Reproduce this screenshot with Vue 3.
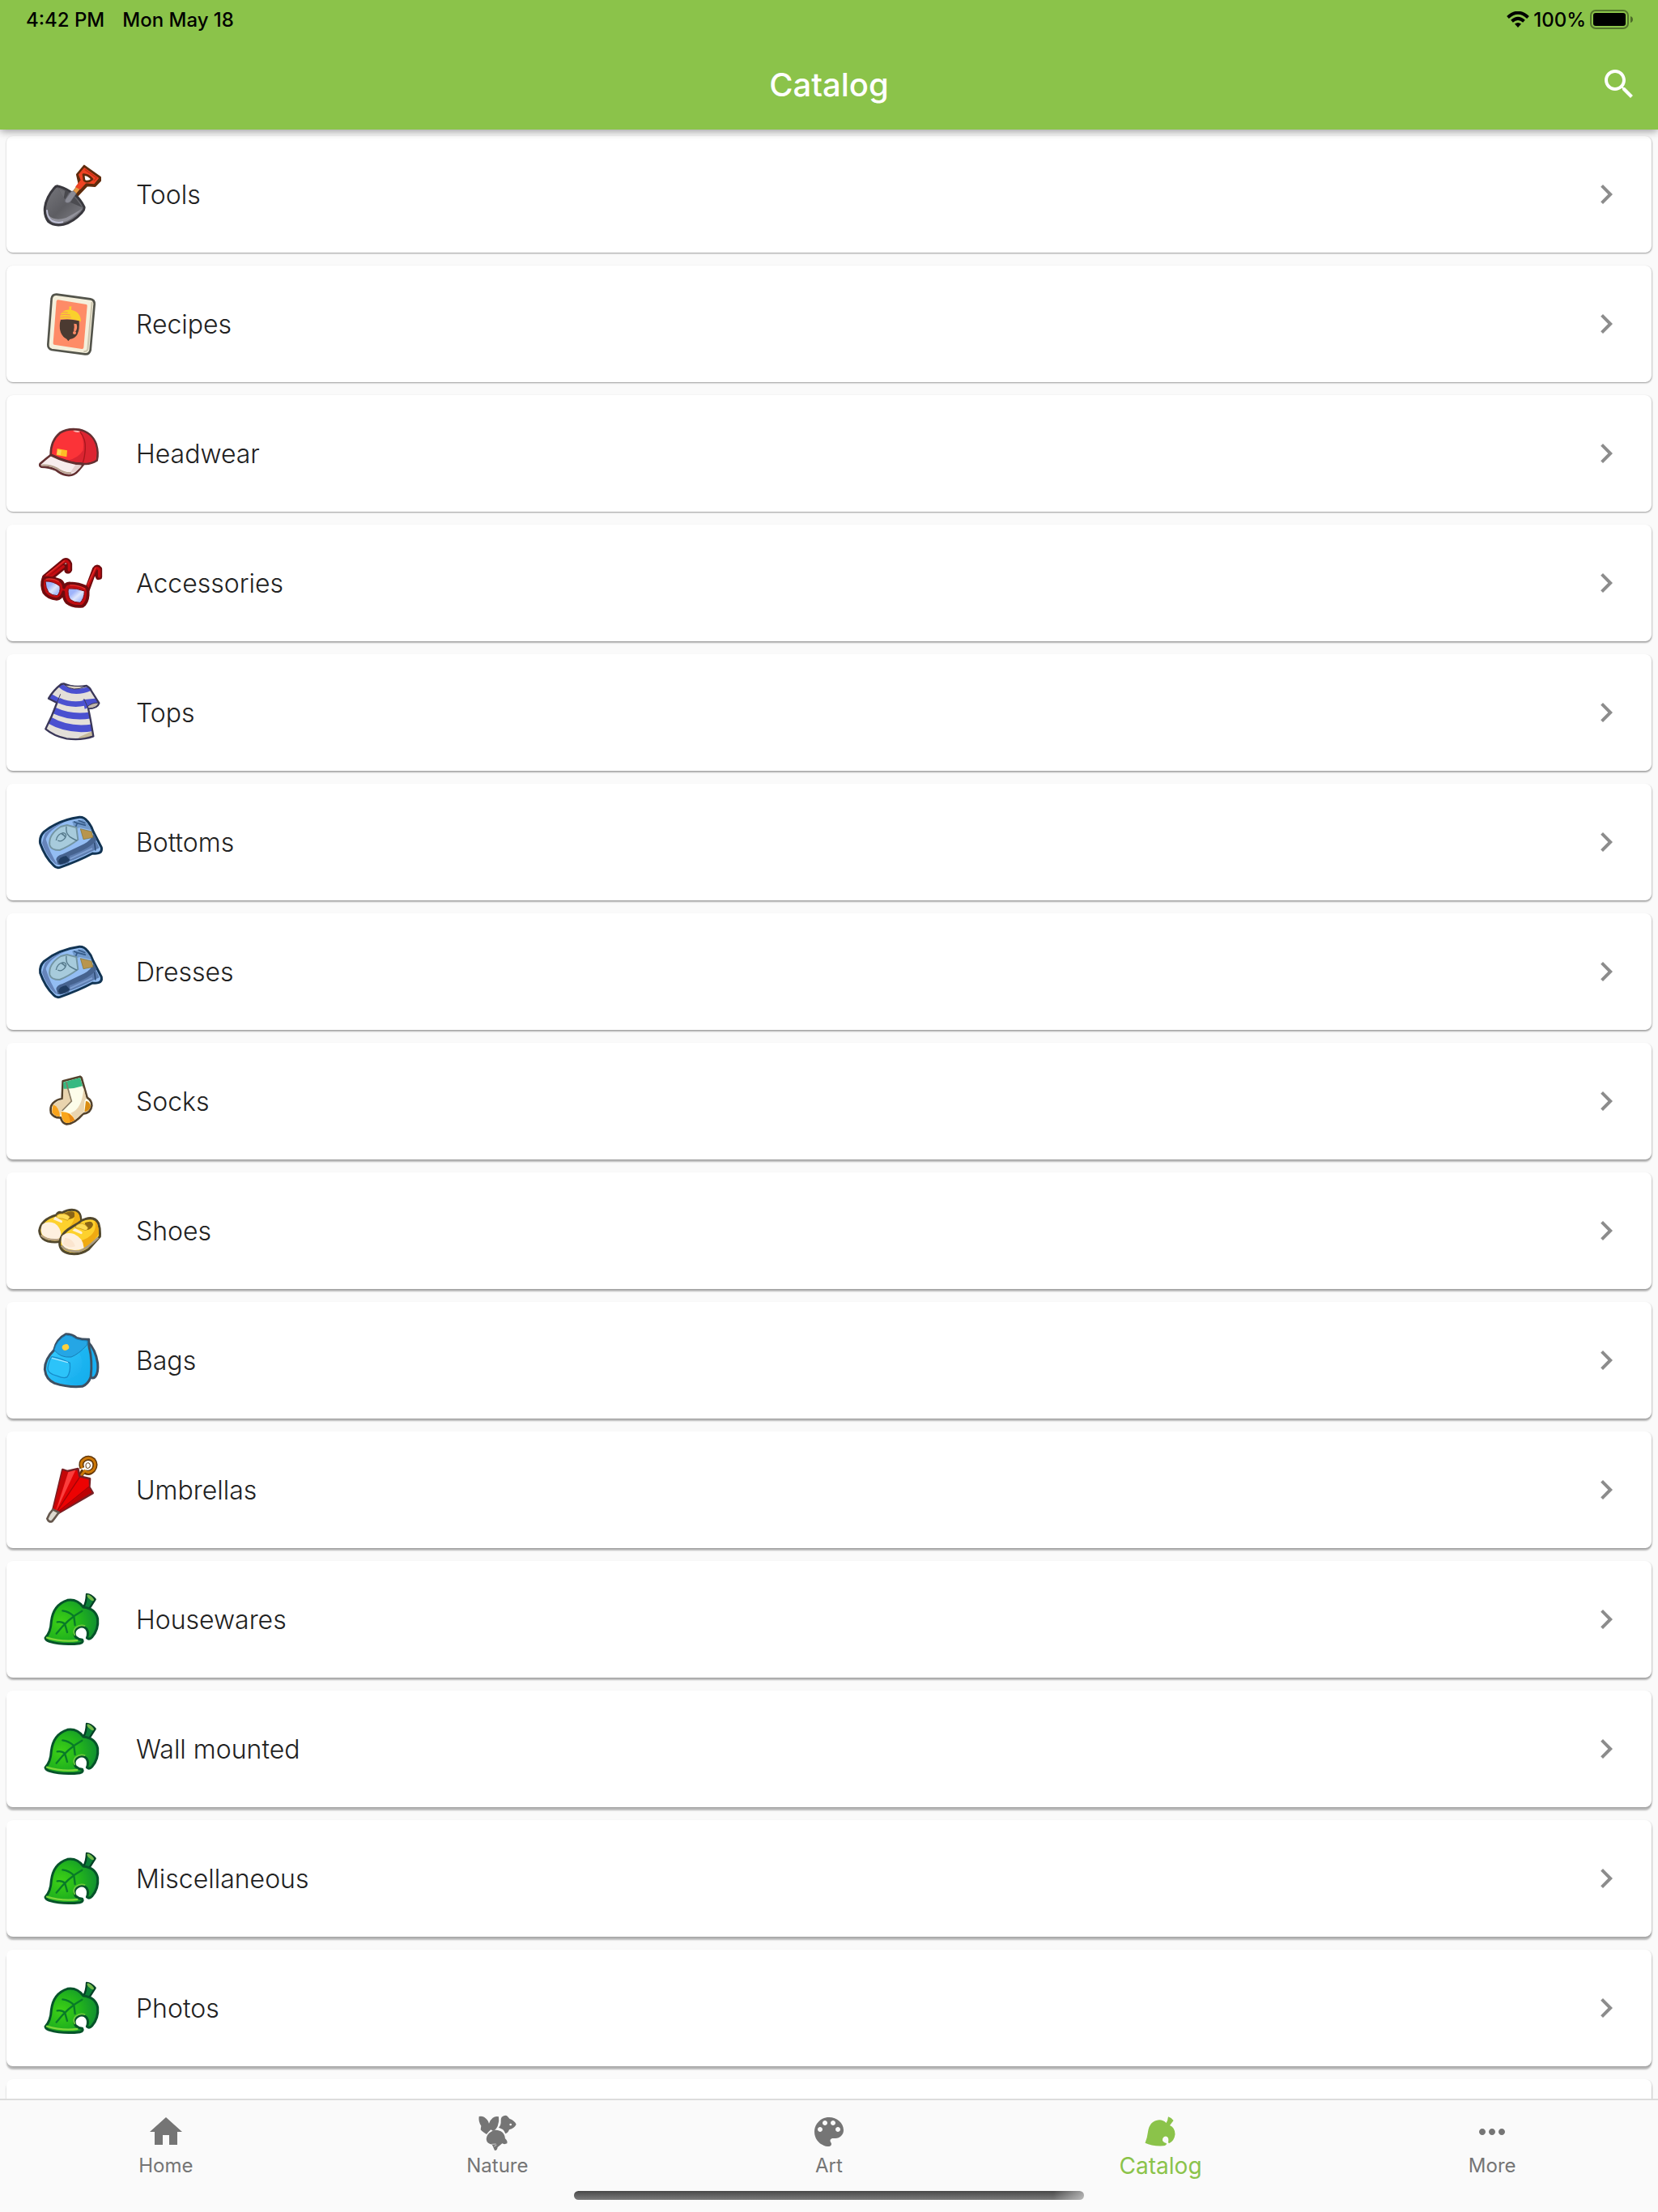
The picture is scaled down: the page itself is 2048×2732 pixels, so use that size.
<template>
  <div class="app">
    <svg class="sprite" aria-hidden="true">
      <defs>
        <linearGradient id="g-lens" x1="0" y1="0" x2="1" y2="1">
          <stop offset="0.3" stop-color="#9fb4fb" />
          <stop offset="0.55" stop-color="#dfe7fd" />
          <stop offset="0.8" stop-color="#a9bdf8" />
        </linearGradient>
        <linearGradient id="g-bag" x1="0" y1="0" x2="1" y2="1">
          <stop offset="0.3" stop-color="#2fc6fb" />
          <stop offset="1" stop-color="#12a6ea" />
        </linearGradient>
        <linearGradient id="g-shovel" x1="0" y1="0" x2="1" y2="1">
          <stop offset="0" stop-color="#77777d" />
          <stop offset="0.5" stop-color="#5d5d62" />
          <stop offset="1" stop-color="#85858c" />
        </linearGradient>
        <radialGradient id="g-leaf" cx="0.3" cy="0.5" r="0.75">
          <stop offset="0" stop-color="#3ed016" />
          <stop offset="0.5" stop-color="#22b41c" />
          <stop offset="1" stop-color="#0d8a35" />
        </radialGradient>
      </defs>

      <symbol id="tools" viewBox="30 6 288 288">
        <path d="M171 158 L204 112 L196 77 L222 45 L281 87 L281 99 L262 119 L232 117 L188 164Z" fill="#5f2b0c" stroke="#5f2b0c" stroke-width="8" stroke-linejoin="round" />
        <path d="M176 146 L194 120 L207 130 L188 152Z" fill="#e79a45" />
        <path d="M192 122 L211 97 L203 77 L223 53 L274 90 L258 110 L228 107 L207 130Z" fill="#ee4423" stroke="#ee4423" stroke-width="4" stroke-linejoin="round" />
        <path d="M224 58 L268 89 L257 101" fill="none" stroke="#c92f17" stroke-width="4" />
        <path d="M219 77 Q236 76 252 94 Q235 109 222 98Z" fill="#fff" stroke="#5f2b0c" stroke-width="8" stroke-linejoin="round" />
        <path d="M125 120 Q144 124 167 138 L185 149 Q208 168 222 197 Q224 207 213 218 Q182 252 145 262 Q108 268 90 252 Q74 232 76 202 Q80 163 111 127 Q117 118 125 120Z" fill="url(#g-shovel)" stroke="#39383e" stroke-width="9" stroke-linejoin="round" />
        <path d="M82 207 Q84 239 103 252 Q137 261 170 242 Q199 222 215 203 Q183 222 155 237 Q113 250 91 229Z" fill="#92929b" />
        <path d="M84 210 Q85 236 103 249 Q123 258 142 253" fill="none" stroke="#bfc0d6" stroke-width="6" stroke-linecap="round" />
        <path d="M124 126 L167 141 L151 169Z" fill="#49494e" />
        <path d="M124 126 L151 137 L146 163Z" fill="#6d6d72" />
        <path d="M184 158 L216 199 L170 179Z" fill="#4c4c51" />
        <path d="M153 169 L173 140 Q184 134 192 148 L171 177 Q157 187 151 176Z" fill="#8a8b95" stroke="#6b6b75" stroke-width="2" />
      </symbol>

      <symbol id="recipes" viewBox="30 486 288 288">
        <path d="M120 521 L245 538 Q261 541 260 557 L245 727 Q241 744 225 742 L102 726 Q87 722 88 706 L101 536 Q104 520 120 521Z" fill="#f4efdb" stroke="#53544b" stroke-width="8" />
        <path d="M251 549 L235 725 Q231 733 220 733" fill="none" stroke="#cbc5af" stroke-width="6" />
        <path d="M125 541 L230 558 Q234 559 233 565 L220 718 Q219 724 213 723 L110 707 Q106 706 107 700 L119 547 Q120 541 125 541Z" fill="#fe8b67" />
        <path d="M133 604 Q133 580 167 577 L166 566 L175 565 L174 578 Q209 585 210 621 Q200 619 190 615 Q157 609 133 612Z" fill="#fad02c" />
        <path d="M134 588 Q149 586 161 588 M132 597 Q151 593 170 597 M133 606 Q151 602 173 606" fill="none" stroke="#fe8b67" stroke-width="3" />
        <path d="M135 615 Q168 610 203 619 Q208 683 169 687 L163 694 L157 686 Q127 670 132 626Z" fill="#4b3a31" />
        <path d="M184 629 L194 631 Q198 647 191 657 L183 656 Q187 642 184 629Z" fill="#fe8b67" />
        <circle cx="186" cy="663" r="6" fill="#fe8b67" />
      </symbol>

      <symbol id="headwear" viewBox="30 36 288 288">
        <path d="M98 184 Q98 132 132 104 Q160 86 203 92 Q249 102 266 145 Q276 179 269 206 Q244 222 218 218 Q160 216 98 184Z" fill="#fb3338" stroke="#633031" stroke-width="8" stroke-linejoin="round" />
        <path d="M205 96 Q252 107 264 151 Q272 179 264 203 Q244 216 219 214 Q191 214 158 207 Q199 199 218 169 Q224 130 205 96Z" fill="#dc2531" />
        <path d="M205 98 Q229 127 226 163 Q224 194 217 214" fill="none" stroke="#a9171c" stroke-width="4" />
        <path d="M180 96 Q193 93 208 99 Q195 107 180 96Z" fill="#f5b8b7" />
        <path d="M122 162 L159 169 L157 193 L119 186Z" fill="#fdbd25" />
        <path d="M124 166 L138 169 L134 187 L121 184Z" fill="#fdd755" />
        <path d="M98 186 Q157 216 219 221 L201 243 Q182 266 154 260 Q137 257 118 242 Q93 230 63 230 Q55 226 59 218 Q77 202 98 186Z" fill="#f8eded" stroke="#633031" stroke-width="8" stroke-linejoin="round" />
        <path d="M190 222 L213 224 Q199 248 169 253Z" fill="#e5d1cf" />
        <path d="M64 224 Q96 222 121 235 Q145 254 174 253" fill="none" stroke="#b6a08d" stroke-width="6" />
      </symbol>

      <symbol id="accessories" viewBox="30 516 288 288">
        <g fill="none" stroke-linecap="round" stroke-linejoin="round">
          <path d="M76 638 L148 578 Q162 573 168 590 L168 611 Q165 619 158 615 L156 599 M98 641 L149 599" stroke="#6f0b0e" stroke-width="19" />
          <path d="M233 685 L261 609 Q270 596 279 608 L279 638 L274 639 L267 623" stroke="#6f0b0e" stroke-width="19" />
          <path d="M78 639 L148 580 Q160 575 166 591 L166 612 M94 639 L145 599" stroke="#c30c11" stroke-width="10" />
          <path d="M233 678 L263 608 Q270 600 278 611 L278 636" stroke="#c30c11" stroke-width="10" />
          <path d="M83 630 L148 579 M235 665 L264 604" stroke="#e2302b" stroke-width="4" />
        </g>
        <path d="M70 642 Q102 637 132 650 Q146 658 147 677 Q152 660 170 661 Q203 662 228 674 Q238 682 236 705 Q234 734 216 746 Q180 750 158 733 Q145 720 145 693 Q138 718 120 720 Q88 717 73 696 Q61 667 70 642Z" fill="#c30c11" stroke="#6f0b0e" stroke-width="11" stroke-linejoin="round" />
        <path d="M78 654 Q107 652 132 672 Q135 694 122 707 Q103 707 90 695 Q79 678 78 654Z" fill="url(#g-lens)" stroke="#7d0b10" stroke-width="3" />
        <path d="M163 681 Q193 678 223 690 Q222 719 207 733 Q184 733 170 721 Q160 705 163 681Z" fill="url(#g-lens)" stroke="#7d0b10" stroke-width="3" />
        <path d="M80 646 Q107 642 128 655 M169 668 Q203 668 225 682" fill="none" stroke="#e2302b" stroke-width="4" />
      </symbol>

      <symbol id="tops" viewBox="30 36 288 288">
        <clipPath id="c-shirt">
          <path d="M146 73 Q185 90 231 81 Q244 88 249 101 L277 145 Q271 165 237 165 Q245 200 256 268 Q214 284 157 277 Q109 267 79 241 Q103 194 121 144 L90 128 Q107 98 137 75Z" />
        </clipPath>
        <g clip-path="url(#c-shirt)">
          <path d="M70 60H290V290H70Z" fill="#e3dfd9" />
          <path d="M132 78 Q178 119 245 90" fill="none" stroke="#4a50d0" stroke-width="18" />
          <path d="M128 135 Q175 156 224 145" fill="none" stroke="#4a50d0" stroke-width="20" />
          <path d="M110 172 Q175 202 246 190" fill="none" stroke="#4a50d0" stroke-width="24" />
          <path d="M92 208 Q165 250 254 236" fill="none" stroke="#4a50d0" stroke-width="26" />
          <path d="M88 117 L127 139" stroke="#4a50d0" stroke-width="23" />
          <path d="M217 133 L275 127 L279 145 L224 167Z" fill="#4a50d0" />
          <path d="M205 270 L251 250 L260 280 L195 283Z" fill="#c4b899" />
        </g>
        <path d="M146 73 Q185 90 231 81 Q244 88 249 101 L277 145 Q271 165 237 165 Q245 200 256 268 Q214 284 157 277 Q109 267 79 241 Q103 194 121 144 L90 128 Q107 98 137 75Z" fill="none" stroke="#3a3759" stroke-width="7" stroke-linejoin="round" />
        <path d="M149 78 Q181 105 226 84 Q183 83 149 78Z" fill="#d9cfbf" stroke="#3a3759" stroke-width="3" />
        <path d="M233 159 Q250 143 276 144 Q270 164 239 165Z" fill="#bfb6ac" stroke="#3a3759" stroke-width="3" />
        <path d="M134 112 L121 144 M221 129 L237 165" stroke="#3a3759" stroke-width="3" />
      </symbol>

      <symbol id="bottoms" viewBox="30 516 288 288">
        <path d="M73 622 Q128 578 204 568 Q222 567 234 583 Q248 598 255 620 L286 680 Q289 697 275 701 Q263 704 253 702 Q201 730 132 754 Q119 758 109 747 Q77 716 59 665 Q55 640 73 622Z" fill="#93bdf3" stroke="#123453" stroke-width="9" stroke-linejoin="round" />
        <path d="M77 628 Q106 600 150 586 Q89 616 80 650 Q96 703 124 744 L114 741 Q79 708 66 663Z" fill="#6584ba" />
        <path d="M124 743 Q114 717 144 705 L210 680 Q240 666 258 638 L278 682 L249 695 Q182 731 124 743Z" fill="#5d7daf" />
        <path d="M118 724 Q120 710 142 705 L222 667 Q245 655 258 630 L268 650 Q252 680 168 711 L166 736 Q136 748 124 743Z" fill="#46638f" />
        <path d="M126 733 Q129 715 155 711 L169 727 Q151 742 132 743Z" fill="#203d62" />
        <path d="M170 722 L252 684" fill="none" stroke="#7d9ed0" stroke-width="6" />
        <path d="M260 662 L264 692" fill="none" stroke="#27456d" stroke-width="4" />
        <path d="M177 584 L216 577 Q239 590 249 616 L206 606 L188 611Z" fill="#7099ca" />
        <path d="M183 584 L196 590 L189 608 M196 590 L228 598 M200 580 L226 590" fill="none" stroke="#365b88" stroke-width="5" />
        <path d="M158 597 L193 606 L199 651 Q166 676 131 690 Q99 690 94 671 Q89 632 135 603Z" fill="#a7cbdc" stroke="#7395a2" stroke-width="6" />
        <path d="M156 602 Q152 626 168 640 Q180 648 196 655 M118 654 Q122 630 144 626 Q160 628 152 644 Q138 662 124 654 M152 644 Q150 634 138 630" fill="none" stroke="#54788a" stroke-width="4" />
        <path d="M208 611 L249 621 L255 643 L219 650Z" fill="#b8954d" stroke="#80722f" stroke-width="2" />
      </symbol>

      <symbol id="socks" viewBox="30 36 288 288">
        <path d="M143 106 L207 89 Q213 91 214 101 L233 167 Q251 178 250 197 Q247 224 218 227 Q185 266 156 265 Q139 261 135 241 Q111 243 99 224 Q94 202 106 188 Q120 173 140 171Z" fill="#fdfdea" stroke="#53422c" stroke-width="8" stroke-linejoin="round" />
        <path d="M146 133 L164 131 L175 180 L139 216 L132 238 Q112 236 103 222 Q99 201 111 189 Q125 177 143 174Z" fill="#e9d4ae" />
        <path d="M107 193 Q130 201 132 238 Q112 236 103 221Z" fill="#f8a31c" />
        <path d="M137 219 Q175 219 187 250 Q162 268 148 257 Q137 246 137 219Z" fill="#f9a61c" />
        <path d="M159 224 Q178 233 187 250 L170 259 Q170 241 159 224Z" fill="#e78814" />
        <path d="M172 224 Q215 210 220 130 L230 170 L223 180 L221 221 L188 249Z" fill="#e9d5b0" />
        <path d="M228 180 Q241 180 246 197 Q243 216 223 220Z" fill="#d98c12" />
        <path d="M144 110 L207 93 L216 124 Q181 136 146 134Z" fill="#37b981" />
        <path d="M156 110 L161 131 L175 180 L140 216" fill="none" stroke="#887a62" stroke-width="5" />
      </symbol>

      <symbol id="shoes" viewBox="30 516 288 288">
        <path d="M119 602 Q127 588 139 594 Q164 580 187 584 Q204 589 208 606 L212 638 Q193 667 166 691 Q124 708 88 699 Q59 691 56 660 Q62 618 119 602Z" fill="#fdd12d" stroke="#51482e" stroke-width="9" stroke-linejoin="round" />
        <path d="M145 597 Q185 579 190 601 Q185 618 161 618Z" fill="#8a6516" />
        <path d="M185 587 Q203 590 206 611 L209 634 Q183 652 165 674 L152 658 Q193 629 185 587Z" fill="#f0b216" />
        <path d="M121 602 Q150 589 169 609 L161 622 Q141 612 120 614Z" fill="#fddb55" stroke="#c48d12" stroke-width="2" />
        <path d="M115 608 L138 622 Q145 628 137 631 L107 618Z" fill="#fdf0d5" />
        <path d="M66 638 Q84 622 113 633 Q140 651 136 688 Q89 698 66 674 Q58 656 66 638Z" fill="#fef0df" />
        <path d="M62 677 Q86 699 135 692" fill="none" stroke="#b9a385" stroke-width="7" />
        <path d="M200 632 Q210 621 226 617 Q261 606 275 633 Q282 655 280 682 Q263 701 238 729 Q207 751 168 745 Q133 738 131 709 Q132 671 177 646Z" fill="#fdd12d" stroke="#51482e" stroke-width="9" stroke-linejoin="round" />
        <path d="M224 631 Q252 618 255 638 Q251 653 231 658Z" fill="#8a6516" />
        <path d="M260 621 Q276 636 276 670 Q267 693 223 724 L211 697 Q277 674 260 621Z" fill="#efaa12" />
        <path d="M192 641 Q216 622 236 649 Q232 664 218 656 Q203 649 190 650Z" fill="#fddb55" stroke="#c48d12" stroke-width="2" />
        <path d="M188 651 L212 663 Q219 669 211 673 L178 659Z" fill="#fdf0d5" />
        <path d="M139 682 Q153 663 184 672 Q222 690 220 725 Q185 740 148 723 Q132 706 139 682Z" fill="#fef0df" />
        <path d="M151 686 Q181 689 189 718 Q164 728 144 709Z" fill="#fbe5cf" />
        <path d="M138 716 Q158 741 205 736 Q233 726 274 686" fill="none" stroke="#a99a83" stroke-width="8" />
      </symbol>

      <symbol id="bags" viewBox="30 36 288 288">
        <path d="M235 111 Q264 139 272 191 Q275 226 264 240 Q257 249 246 244Z" fill="#18aef0" stroke="#3e5062" stroke-width="9" stroke-linejoin="round" />
        <path d="M110 143 Q119 101 155 83 Q178 83 194 97 Q216 104 239 103 L240 130 Q253 181 246 242 Q237 268 215 277 Q165 282 112 265 Q80 251 76 214 Q76 176 110 143Z" fill="url(#g-bag)" stroke="#3e5062" stroke-width="9" stroke-linejoin="round" />
        <path d="M202 151 Q222 179 210 220 Q187 249 152 253 L207 271 Q243 259 243 230 Q249 176 236 133Z" fill="#15b2ef" opacity="0.55" />
        <path d="M111 142 Q120 105 155 87 Q176 87 192 101 Q211 108 234 108 L233 123 Q202 157 174 168 Q133 172 111 142Z" fill="#25a6e5" stroke="#177db5" stroke-width="3" />
        <path d="M102 167 Q139 174 169 190 Q172 225 159 242 Q148 249 122 238 Q86 230 87 210 Q91 181 102 167Z" fill="#2cc3f9" stroke="#168bc9" stroke-width="4" />
        <path d="M103 172 L160 188" stroke="#a6e7ff" stroke-width="4" stroke-linecap="round" />
        <ellipse cx="153" cy="132" rx="13" ry="11" fill="#fdd13e" transform="rotate(-20 153 132)" />
      </symbol>

      <symbol id="umbrellas" viewBox="30 516 288 288">
        <path d="M210 605 L220 588 M214 580 Q206 558 221 548 Q239 536 256 550 Q269 567 256 586 Q243 602 226 594" fill="none" stroke="#62360a" stroke-width="18" />
        <path d="M214 580 Q206 558 221 548 Q239 536 256 550 Q269 567 256 586 Q240 602 224 590 L210 608" fill="none" stroke="#cd7908" stroke-width="9" />
        <path d="M228 568 Q230 558 240 561 Q247 568 243 576 Q236 584 229 578Z" fill="#fff" stroke="#62360a" stroke-width="3" />
        <path d="M142 585 L159 591 L199 582 L205 610 L243 619 L241 650 L254 672 L117 752 L106 735Z" fill="#e20305" stroke="#782025" stroke-width="8" stroke-linejoin="round" />
        <path d="M142 588 L163 594 L111 742 L107 733Z" fill="#c40708" />
        <path d="M163 595 L190 587 L116 744Z" fill="#fb3e3d" />
        <path d="M204 614 L238 622 L240 651 L124 743Z" fill="#ed0202" />
        <path d="M205 614 L117 745 M240 649 L119 747" stroke="#a70306" stroke-width="4" />
        <path d="M240 651 L250 670 L126 746 Z" fill="#bc0204" />
        <path d="M106 733 L128 744 Q112 767 103 777 Q91 782 85 767 Q92 747 106 733Z" fill="#ddd9cf" stroke="#66584e" stroke-width="8" stroke-linejoin="round" />
      </symbol>

      <symbol id="leaf" viewBox="30 36 288 288">
        <path d="M218 137 Q230 119 231 87 Q247 88 263 106 L242 139Z" fill="#0c8038" stroke="#043f25" stroke-width="7" stroke-linejoin="round" />
        <ellipse cx="245" cy="100" rx="16" ry="6" transform="rotate(42 245 100)" fill="#73bb4b" />
        <path d="M78 249 Q98 228 100 188 Q107 126 160 109 Q195 103 219 135 Q264 140 272 178 Q276 217 251 246 Q241 257 232 249 Q240 230 230 215 Q217 201 198 212 Q179 226 190 245 Q200 255 215 256 Q220 265 207 269 Q144 277 93 262 Q79 257 78 249Z" fill="url(#g-leaf)" stroke="#06532a" stroke-width="9" stroke-linejoin="round" />
        <path d="M84 248 Q139 265 196 258" fill="none" stroke="#80d63c" stroke-width="7" stroke-linecap="round" />
        <path d="M188 240 Q178 224 190 211 Q207 197 226 205" fill="none" stroke="#6ecb3c" stroke-width="5" />
        <path d="M214 149 Q161 178 119 233 M184 169 Q166 151 142 148 M184 170 L188 201 M151 198 Q140 187 122 190 M151 199 L159 228" fill="none" stroke="#087a28" stroke-width="7" stroke-linecap="round" />
      </symbol>

      <symbol id="nav-home" viewBox="0 0 24 24">
        <path d="M10 20v-6h4v6h5v-8h3L12 3 2 12h3v8z" />
      </symbol>
      <symbol id="nav-nature" viewBox="31 27 144 144">
        <path d="M36 42 Q53 38 66 54 Q72 61 73 68 Q77 55 87 47 Q97 39 109 43 Q112 60 105 78 Q97 94 88 96 L80 91 Q72 98 64 108 L56 103 Q47 98 42 91 L44 77 Q33 61 36 42Z" />
        <path fill-rule="evenodd" d="M120 44 Q134 34 142 42 Q145 46 149 50 Q168 57 174 71 Q168 85 148 91 Q144 103 134 106 Q130 95 124 90 L109 83 Q118 74 117 61Q116 50 120 44Z M153 68a4 4 0 1 0 0 8a4 4 0 1 0 0-8Z" />
        <path d="M80 99 Q97 86 117 97 Q131 104 133 124 Q143 133 140 142 Q130 147 122 142 L105 156 Q103 170 94 168 L88 154 L84 146 Q65 143 63 126 Q64 109 80 99Z" />
        <path d="M83 145 L99 144 M92 153 L101 148" stroke="#fafafa" stroke-width="2" />
      </symbol>
      <symbol id="nav-art" viewBox="0 0 24 24">
        <path d="M12 3c-4.970 0-9 4.030-9 9s4.030 9 9 9c.83 0 1.500-.67 1.500-1.500 0-.39-.15-.74-.39-1.010-.23-.26-.38-.61-.38-.99 0-.83.67-1.500 1.500-1.500H16c2.760 0 5-2.240 5-5 0-4.420-4.030-8-9-8zm-5.500 9c-.83 0-1.500-.67-1.500-1.500S5.670 9 6.500 9 8 9.670 8 10.500 7.330 12 6.500 12zm3-4C8.670 8 8 7.330 8 6.500S8.670 5 9.500 5s1.500.67 1.500 1.500S10.330 8 9.500 8zm5 0c-.83 0-1.500-.67-1.500-1.500S13.670 5 14.500 5s1.500.67 1.500 1.500S15.330 8 14.500 8zm3 4c-.83 0-1.500-.67-1.500-1.500S16.670 9 17.500 9s1.500.67 1.500 1.500-.67 1.500-1.500 1.500z" />
      </symbol>
      <symbol id="nav-catalog" viewBox="0 0 48 48">
        <path d="M4.500 37.700 Q7 32 8 24 Q10 10 22 9.300 Q27 9.300 30.500 13 Q32.500 10 33 5.300 Q37 6.500 39.500 10 L35 16 Q41.500 19 41.500 27 Q40.500 35 34.500 38 L33 37.500 Q34.500 30 30 29.500 Q25.500 30 26 35 Q28 38 31 38.300 Q31 41 27 41.300 Q13 42 4.500 37.700Z" />
      </symbol>
      <symbol id="nav-more" viewBox="0 0 24 24">
        <path d="M6 10c-1.100 0-2 .9-2 2s.9 2 2 2 2-.9 2-2-.9-2-2-2zm12 0c-1.100 0-2 .9-2 2s.9 2 2 2 2-.9 2-2-.9-2-2-2zm-6 0c-1.100 0-2 .9-2 2s.9 2 2 2 2-.9 2-2-.9-2-2-2z" />
      </symbol>
    </svg>

    <header class="app-bar">
      <div class="status-bar">
        <div class="status-left">
          <span>4:42 PM</span>
          <span>Mon May 18</span>
        </div>
        <div class="status-right">
          <svg class="wifi" viewBox="0 0 28 20" aria-hidden="true">
            <path d="M1.500 7.500 Q14 -4 26.500 7.500" fill="none" stroke="#000" stroke-width="4" />
            <path d="M6.500 12.300 Q14 5.500 21.500 12.300" fill="none" stroke="#000" stroke-width="4" />
            <path d="M10 15.500 Q14 12.500 18 15.500 L14 20Z" />
          </svg>
          <span>100%</span>
          <svg class="battery" viewBox="0 0 54 24" aria-hidden="true">
            <rect x="1" y="1" width="46" height="22" rx="6" fill="none" stroke="#000" stroke-opacity="0.4" stroke-width="2" />
            <rect x="4" y="4" width="40" height="16" rx="3" />
            <path d="M50 8 Q53 9 53 12 Q53 15 50 16Z" fill-opacity="0.45" />
          </svg>
        </div>
      </div>
      <div class="toolbar">
        <h1 class="title">Catalog</h1>
        <button class="search-btn" type="button" aria-label="Search">
          <svg viewBox="0 0 24 24" aria-hidden="true">
            <path d="M15.500 14h-.79l-.28-.27C15.410 12.590 16 11.110 16 9.500 16 5.910 13.090 3 9.500 3S3 5.910 3 9.500 5.910 16 9.500 16c1.610 0 3.090-.59 4.230-1.570l.27.28v.79l5 4.990L20.490 19l-4.990-5zm-6 0C7.010 14 5 11.990 5 9.500S7.010 5 9.500 5 14 7.010 14 9.500 11.990 14 9.500 14z" />
          </svg>
        </button>
      </div>
    </header>

    <main class="content">
      <ul class="category-list">
        <li v-for="(item, index) in categories" :key="item.name" class="card" :style="cardShadow(index)">
          <a class="tile" href="#">
            <svg class="tile-icon" aria-hidden="true"><use :href="'#' + item.icon" /></svg>
            <span class="tile-name">{{ item.name }}</span>
            <svg class="chevron" viewBox="0 0 24 24" aria-hidden="true">
              <path d="M10 6L8.590 7.410 13.170 12l-4.580 4.590L10 18l6-6z" />
            </svg>
          </a>
        </li>
        <li class="card" :style="cardShadow(categories.length)" aria-hidden="true"></li>
      </ul>
    </main>

    <nav class="bottom-nav">
      <a v-for="tab in tabs" :key="tab.label" href="#" class="nav-item" :class="{ active: tab.label === activeTab }"
        @click.prevent="activeTab = tab.label">
        <svg class="nav-icon" aria-hidden="true"><use :href="'#' + tab.icon" /></svg>
        <span class="nav-label">{{ tab.label }}</span>
      </a>
      <div class="home-indicator"></div>
    </nav>
  </div>
</template>

<script setup>
import { ref } from 'vue'

const activeTab = ref('Catalog')

const categories = [
  { name: 'Tools', icon: 'tools' },
  { name: 'Recipes', icon: 'recipes' },
  { name: 'Headwear', icon: 'headwear' },
  { name: 'Accessories', icon: 'accessories' },
  { name: 'Tops', icon: 'tops' },
  { name: 'Bottoms', icon: 'bottoms' },
  { name: 'Dresses', icon: 'bottoms' },
  { name: 'Socks', icon: 'socks' },
  { name: 'Shoes', icon: 'shoes' },
  { name: 'Bags', icon: 'bags' },
  { name: 'Umbrellas', icon: 'umbrellas' },
  { name: 'Housewares', icon: 'leaf' },
  { name: 'Wall mounted', icon: 'leaf' },
  { name: 'Miscellaneous', icon: 'leaf' },
  { name: 'Photos', icon: 'leaf' }
]

const tabs = [
  { label: 'Home', icon: 'nav-home' },
  { label: 'Nature', icon: 'nav-nature' },
  { label: 'Art', icon: 'nav-art' },
  { label: 'Catalog', icon: 'nav-catalog' },
  { label: 'More', icon: 'nav-more' }
]

const cardShadow = (index) => {
  const y = 1 + Math.round((index * 3) / 14)
  return { boxShadow: `0 ${y}px 2px rgba(0, 0, 0, 0.26), 1px 1px 2px rgba(0, 0, 0, 0.16)` }
}
</script>

<style>
body {
  background: #fafafa;
}
</style>

<style scoped>
.app {
  display: flex;
  flex-direction: column;
  height: 100vh;
  background: #fafafa;
  color: #212121;
  font-family: Inter, "Liberation Sans", sans-serif;
}
.sprite {
  position: absolute;
  width: 0;
  height: 0;
}
.app-bar {
  position: relative;
  z-index: 1;
  background: #8bc34a;
  box-shadow: 0 2px 10px rgba(0, 0, 0, 0.4);
}
.status-bar {
  display: flex;
  justify-content: space-between;
  align-items: center;
  height: 48px;
  padding: 0 30px 0 32px;
  color: #000;
  font-size: 24px;
  font-weight: 500;
}
.status-left {
  display: flex;
  gap: 22px;
}
.status-right {
  display: flex;
  align-items: center;
  gap: 5px;
}
.wifi {
  width: 28px;
  height: 20px;
}
.battery {
  width: 54px;
  height: 24px;
}
.toolbar {
  display: grid;
  grid-template-columns: 1fr auto 1fr;
  align-items: center;
  height: 112px;
  padding: 0 24px;
  color: #fff;
}
.title {
  grid-column: 2;
  margin: 0;
  font-size: 40px;
  font-weight: 500;
}
.search-btn {
  justify-self: end;
  width: 48px;
  height: 48px;
  padding: 0;
  border: none;
  background: transparent;
  cursor: pointer;
}
.search-btn svg {
  display: block;
  fill: #fff;
}
.content {
  flex: 1;
  min-height: 0;
  overflow-y: auto;
  scrollbar-width: none;
}
.category-list {
  display: flex;
  flex-direction: column;
  gap: 16px;
  margin: 0;
  padding: 8px;
  list-style: none;
}
.card {
  flex: none;
  min-height: 144px;
  border-radius: 8px;
  background: #fff;
}
.tile {
  display: flex;
  align-items: center;
  padding: 24px 32px;
  color: inherit;
  text-decoration: none;
}
.tile-icon {
  width: 96px;
  height: 96px;
  margin-right: 32px;
}
.tile-name {
  flex: 1;
  font-size: 32px;
  font-weight: 300;
}
.chevron {
  width: 48px;
  height: 48px;
  fill: #8c8c8c;
}
.bottom-nav {
  position: relative;
  display: flex;
  height: 138px;
  border-top: 2px solid #dcdcdc;
  background: #fafafa;
}
.nav-item {
  display: flex;
  flex: 1;
  flex-direction: column;
  align-items: center;
  gap: 4px;
  padding-top: 15px;
  color: #757575;
  text-decoration: none;
}
.nav-icon {
  width: 48px;
  height: 48px;
  fill: currentColor;
}
.nav-label {
  font-size: 24px;
  line-height: 28px;
}
.nav-item.active {
  color: #8bc34a;
}
.nav-item.active .nav-label {
  font-size: 28px;
}
.home-indicator {
  position: absolute;
  bottom: 15px;
  left: 50%;
  width: 630px;
  height: 11px;
  margin-left: -315px;
  border-radius: 6px;
  background: linear-gradient(to right, transparent 94%, rgba(250, 250, 250, 0.5)), linear-gradient(#484848, #7c7c7c);
}
</style>
